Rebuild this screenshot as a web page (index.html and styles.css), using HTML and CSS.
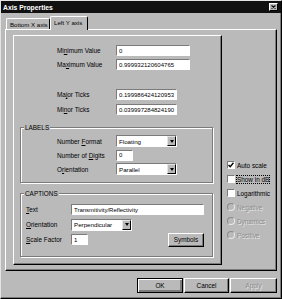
FILE: index.html
```html
<!DOCTYPE html>
<html lang="en">
<head>
  <meta charset="UTF-8" />
  <title>Axis Properties</title>
  <link rel="stylesheet" href="styles.css">
</head>
<body>
  <div class="dialog">
    <div class="titlebar">
      <span class="title">Axis Properties</span>
      <span class="close">
        <svg width="5" height="4" viewBox="0 0 5 4"><path d="M0.5 0.5 L4.5 3.5 M4.5 0.5 L0.5 3.5" stroke="#000" stroke-width="1.1"/></svg>
      </span>
    </div>

    <div class="tabs">
      <div class="tab">Bottom X axis</div>
      <div class="tab tab-active">Left Y axis</div>
    </div>

    <div class="page">
      <div class="main">
        <div class="row row-first">
          <label class="lbl">Mi<u>n</u>imum Value</label>
          <input class="field w-long" type="text" value="0" />
        </div>
        <div class="row row-tight">
          <label class="lbl">Ma<u>x</u>imum Value</label>
          <input class="field w-long" type="text" value="0.999932120604765" />
        </div>
        <div class="row row-gap">
          <label class="lbl">Ma<u>j</u>or Ticks</label>
          <input class="field w-mid" type="text" value="0.199986424120953" />
        </div>
        <div class="row row-tight">
          <label class="lbl">Mi<u>n</u>or Ticks</label>
          <input class="field w-mid" type="text" value="0.039997284824190" />
        </div>

        <div class="group group-labels">
          <span class="legend">LABELS</span>
          <div class="grow">
            <label class="lbl">Number <u>F</u>ormat</label>
            <div class="select w-mid"><span class="select-text">Floating</span><span class="arrow"></span></div>
          </div>
          <div class="grow">
            <label class="lbl">Number of <u>D</u>igits</label>
            <input class="field w-short" type="text" value="0" />
          </div>
          <div class="grow">
            <label class="lbl">O<u>r</u>ientation</label>
            <div class="select w-mid"><span class="select-text">Parallel</span><span class="arrow"></span></div>
          </div>
        </div>

        <div class="group group-captions">
          <span class="legend">CAPTIONS</span>
          <div class="crow">
            <label class="clbl"><u>T</u>ext</label>
            <input class="field w-text" type="text" value="Transmitivity/Reflectivity" />
          </div>
          <div class="crow">
            <label class="clbl"><u>O</u>rientation</label>
            <div class="select w-mid"><span class="select-text">Perpendicular</span><span class="arrow"></span></div>
          </div>
          <div class="crow">
            <label class="clbl"><u>S</u>cale Factor</label>
            <input class="field w-short" type="text" value="1" />
            <button type="button" class="btn btn-symbols">Symbols</button>
          </div>
        </div>
      </div>

      <div class="side">
        <div class="opt">
          <span class="check">
            <svg width="6" height="6" viewBox="0 0 6 6"><path d="M0.5 3 L2.2 4.8 L5.5 0.8" stroke="#000" stroke-width="1.4" fill="none"/></svg>
          </span>
          <span>Auto scale</span>
        </div>
        <div class="opt"><span class="check"></span><span class="focus">Show in dB</span></div>
        <div class="opt"><span class="check"></span><span>Logarithmic</span></div>
        <div class="opt opt-off"><span class="radio"></span><span>Negative</span></div>
        <div class="opt opt-off"><span class="radio"></span><span>Dynamics</span></div>
        <div class="opt opt-off"><span class="radio"></span><span>Positive</span></div>
      </div>
    </div>

    <div class="buttons">
      <button type="button" class="btn btn-ok">OK</button>
      <button type="button" class="btn btn-cancel">Cancel</button>
      <button type="button" class="btn btn-apply" disabled>Apply</button>
    </div>
  </div>
</body>
</html>
```

FILE: styles.css
```css
body {
  margin: 0;
  background-color: #bababa;
  font-family: "Liberation Sans", Arial, sans-serif;
  font-size: 6.4px;
  color: #000;
  white-space: nowrap;
}
u {
  text-underline-offset: 1px;
}
.dialog {
  width: 282px;
  height: 299px;
  box-sizing: border-box;
  border: 1px solid;
  border-color: #e4e4e4 #000 #000 #e4e4e4;
  box-shadow: inset -1px -1px #7b7b7b;
  display: flex;
  flex-direction: column;
}
.titlebar {
  height: 12px;
  background: #111;
  color: #fff;
  display: flex;
  align-items: center;
  padding: 0 3px 0 2px;
}
.title {
  flex: 1;
  font-weight: bold;
  font-size: 6.8px;
}
.close {
  width: 9px;
  height: 8px;
  box-sizing: border-box;
  background: #bababa;
  border: 1px solid;
  border-color: #fff #000 #000 #fff;
  display: flex;
  align-items: center;
  justify-content: center;
}
.tabs {
  height: 16px;
  display: flex;
  align-items: flex-end;
  padding-left: 5px;
}
.tab {
  width: 44px;
  height: 11px;
  box-sizing: border-box;
  padding-left: 3px;
  border: 1px solid;
  border-bottom: none;
  border-color: #fff #000 #000 #fff;
  border-radius: 2px 2px 0 0;
  display: flex;
  align-items: center;
  font-size: 6.1px;
}
.tab-active {
  width: 38px;
  height: 14px;
  margin-bottom: -1px;
  padding-bottom: 2px;
  position: relative;
  z-index: 1;
  background: #bababa;
}
.page {
  margin-left: 4px;
  width: 272px;
  height: 242px;
  box-sizing: border-box;
  border: 1px solid;
  border-color: #fff #000 #000 #fff;
  box-shadow: inset -1px -1px #7b7b7b;
  display: flex;
}
.main {
  margin: 5px 0 0 7px;
  width: 209px;
  height: 230px;
  box-sizing: border-box;
  border: 1px solid;
  border-color: #fff #000 #000 #fff;
  box-shadow: inset -1px -1px #7b7b7b;
}
.row {
  height: 11px;
  display: flex;
  align-items: center;
  padding-left: 43px;
}
.row-first { margin-top: 9px; }
.row-tight { margin-top: 3px; }
.row-gap { margin-top: 19px; }
.row-gap + .row-tight { margin-top: 4px; }
.lbl {
  width: 59px;
  flex: none;
}
.field {
  height: 11px;
  box-sizing: border-box;
  margin: 0;
  padding: 0 0 0 2px;
  border: 1px solid;
  border-color: #7b7b7b #fff #fff #7b7b7b;
  background: #fff;
  font-family: inherit;
  font-size: 6px;
  color: #000;
  outline: none;
}
.w-long { width: 74px; }
.w-mid { width: 61px; }
.w-short { width: 17px; }
.w-text { width: 133px; }
.select {
  height: 12px;
  box-sizing: border-box;
  border: 1px solid;
  border-color: #7b7b7b #fff #fff #7b7b7b;
  background: #fff;
  display: flex;
  align-items: center;
  padding-left: 2px;
  font-size: 6.2px;
}
.select-text {
  flex: 1;
}
.arrow {
  width: 9px;
  height: 10px;
  box-sizing: border-box;
  background: #bababa;
  border: 1px solid;
  border-color: #e4e4e4 #000 #000 #e4e4e4;
  display: flex;
  align-items: center;
  justify-content: center;
}
.arrow::after {
  content: "";
  border-top: 3px solid #000;
  border-left: 2.5px solid transparent;
  border-right: 2.5px solid transparent;
}
.group {
  position: relative;
  margin-left: 6px;
  width: 193px;
  box-sizing: border-box;
  border: 1px solid #7b7b7b;
  box-shadow: inset 1px 1px #fff, 1px 1px #fff;
}
.group-labels {
  margin-top: 12px;
  height: 56px;
  padding: 6px 0 0 36px;
}
.group-captions {
  margin-top: 10px;
  height: 64px;
  padding: 8px 0 0 5px;
}
.legend {
  position: absolute;
  top: -4px;
  left: 3px;
  padding: 0 1px;
  background: #bababa;
  line-height: 7px;
}
.grow {
  height: 14px;
  display: flex;
  align-items: center;
}
.crow {
  height: 15px;
  display: flex;
  align-items: center;
}
.clbl {
  width: 45px;
  flex: none;
}
.btn {
  margin: 0;
  padding: 0;
  box-sizing: border-box;
  background: #bababa;
  border: 1px solid;
  border-color: #fff #000 #000 #fff;
  box-shadow: inset -1px -1px #7b7b7b;
  font-family: inherit;
  font-size: 6.4px;
  color: #000;
}
.btn-symbols {
  width: 36px;
  height: 14px;
  margin-left: auto;
  margin-right: 8px;
}
.side {
  padding: 128px 0 0 5px;
  flex: 1;
}
.opt {
  height: 14px;
  display: flex;
  align-items: center;
  gap: 2px;
}
.check {
  width: 8px;
  height: 8px;
  box-sizing: border-box;
  background: #fff;
  border: 1px solid;
  border-color: #7b7b7b #fff #fff #7b7b7b;
  display: flex;
  align-items: center;
  justify-content: center;
}
.radio {
  width: 8px;
  height: 8px;
  box-sizing: border-box;
  border-radius: 50%;
  border: 1px solid;
  border-color: #8a8a8a #e8e8e8 #e8e8e8 #8a8a8a;
  background: #bababa;
}
.focus {
  outline: 1px dotted #000;
  outline-offset: 0;
}
.opt-off {
  color: #8c8c8c;
  text-shadow: 1px 1px #e8e8e8;
}
.buttons {
  margin-top: 7px;
  height: 15px;
  display: flex;
  justify-content: flex-end;
  gap: 1px;
  padding-right: 4px;
}
.btn-ok {
  width: 46px;
  border-color: #000;
  box-shadow: inset 1px 1px #fff, inset -2px -2px #7b7b7b;
}
.btn-cancel { width: 45px; }
.btn-apply {
  width: 47px;
  color: #8c8c8c;
  text-shadow: 1px 1px #e8e8e8;
}
```
